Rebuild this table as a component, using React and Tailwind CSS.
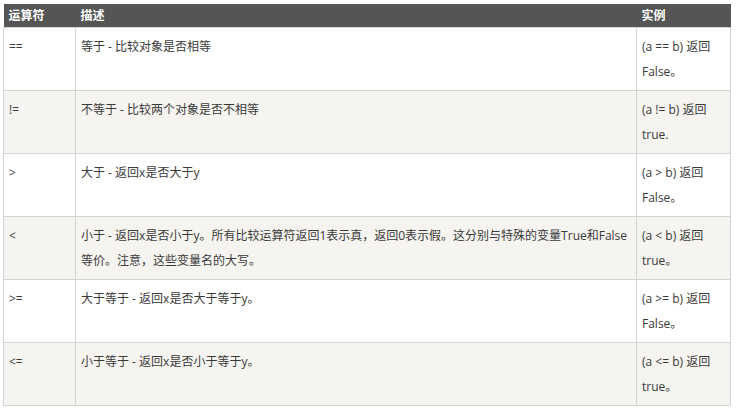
const rows = [
  { op: "==", desc: ["等于 - 比较对象是否相等"], ex: ["(a == b) 返回", "False。"] },
  { op: "!=", desc: ["不等于 - 比较两个对象是否不相等"], ex: ["(a != b) 返回", "true."] },
  { op: ">", desc: ["大于 - 返回x是否大于y"], ex: ["(a > b) 返回", "False。"] },
  {
    op: "<",
    desc: [
      "小于 - 返回x是否小于y。所有比较运算符返回1表示真，返回0表示假。这分别与特殊的变量True和False",
      "等价。注意，这些变量名的大写。",
    ],
    ex: ["(a < b) 返回", "true。"],
  },
  { op: ">=", desc: ["大于等于 - 返回x是否大于等于y。"], ex: ["(a >= b) 返回", "False。"] },
  { op: "<=", desc: ["小于等于 - 返回x是否小于等于y。"], ex: ["(a <= b) 返回", "true。"] },
];

export default function App() {
  return (
    <div
      className="w-[736px] h-[409px] bg-white pl-[3px] pt-[4px] text-[12px] text-[#3a3a3a]"
      style={{ fontFamily: '"Open Sans", "Noto Sans CJK SC", sans-serif' }}
    >
      <table className="table-fixed border-collapse w-[727px]">
        <colgroup>
          <col className="w-[72px]" />
          <col className="w-[561px]" />
          <col className="w-[94px]" />
        </colgroup>
        <thead>
          <tr className="bg-[#555555] text-white font-bold">
            <th className="text-left px-[5px] leading-[23px] font-bold">运算符</th>
            <th className="text-left px-[5px] leading-[23px] font-bold">描述</th>
            <th className="text-left px-[5px] leading-[23px] font-bold">实例</th>
          </tr>
        </thead>
        <tbody>
          {rows.map((r, i) => (
            <tr key={i} className={i % 2 === 1 ? "bg-[#f6f4f0] h-[63px]" : "bg-white h-[63px]"}>
              <td className="border border-[#d4d4d4] align-top px-[5px] pt-[6px] leading-[25px]">{r.op}</td>
              <td className="border border-[#d4d4d4] align-top px-[5px] pt-[6px] leading-[25px]">
                {r.desc.map((d, j) => (
                  <div key={j}>{d}</div>
                ))}
              </td>
              <td className="border border-[#d4d4d4] align-top px-[5px] pt-[6px] leading-[25px]">
                {r.ex.map((d, j) => (
                  <div key={j}>{d}</div>
                ))}
              </td>
            </tr>
          ))}
        </tbody>
      </table>
    </div>
  );
}
